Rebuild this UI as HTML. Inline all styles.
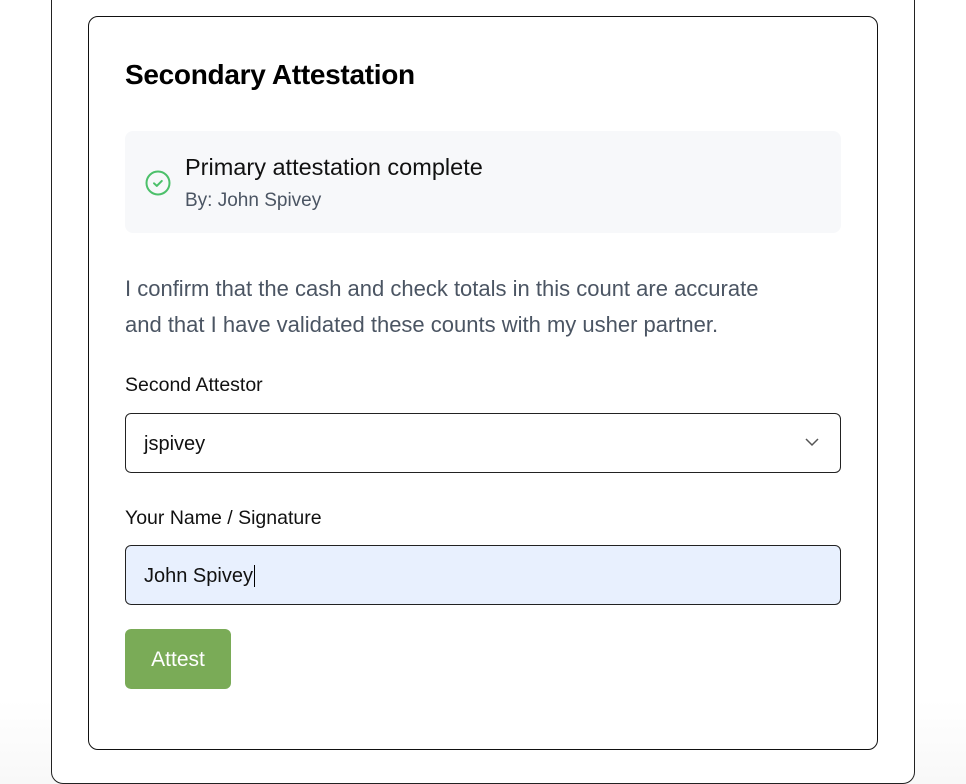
<!DOCTYPE html>
<html><head><style>
body{margin:0;width:966px;height:784px;background:linear-gradient(#fff 0,#fff 700px,#f8f8f8 784px);font-family:"Liberation Sans",sans-serif;position:relative;overflow:hidden}
.outer{position:absolute;left:51px;top:-20px;width:862px;height:802px;border:1px solid #222;border-radius:12px;background:#fff}
.card{position:absolute;left:88px;top:16px;width:788px;height:732px;border:1px solid #111;border-radius:10px;background:#fff}
h2{position:absolute;left:36px;top:42px;margin:0;font-size:28px;font-weight:bold;color:#000;letter-spacing:-0.3px}
.note{position:absolute;left:36px;top:114px;width:716px;height:102px;background:#f7f8fa;border-radius:8px}
.note .t1{position:absolute;left:60px;top:23px;font-size:23.5px;color:#111}
.note .t2{position:absolute;left:60px;top:59px;font-size:19px;color:#4b5563}
.p{position:absolute;left:36px;top:254px;font-size:22px;line-height:36px;color:#4b5563;width:660px}
.lbl{position:absolute;left:36px;font-size:19.5px;color:#111}
.inp{position:absolute;left:36px;width:714px;height:58px;border:1px solid #222;border-radius:6px;font-size:20px;color:#111;box-sizing:content-box}
.inp span{position:absolute;left:18px;top:19px}
.btn{position:absolute;left:36px;top:612px;width:106px;height:60px;background:#7aab57;border-radius:6px;color:#fff;font-size:21px;text-align:center;line-height:62px}
</style></head><body>
<div class="outer"></div>
<div class="card">
<h2>Secondary Attestation</h2>
<div class="note">
<svg style="position:absolute;left:20px;top:39px" width="26" height="26" viewBox="0 0 26 26"><circle cx="13" cy="13" r="11.5" fill="none" stroke="#4cc06a" stroke-width="2"/><path d="M9 13.3l2.8 2.6 5-5" fill="none" stroke="#4cc06a" stroke-width="2" stroke-linecap="round" stroke-linejoin="round"/></svg>
<div class="t1">Primary attestation complete</div>
<div class="t2">By: John Spivey</div>
</div>
<div class="p">I confirm that the cash and check totals in this count are accurate and that I have validated these counts with my usher partner.</div>
<div class="lbl" style="top:357px">Second Attestor</div>
<div class="inp" style="top:396px;background:#fff"><span>jspivey</span>
<svg style="position:absolute;right:20px;top:23px" width="16" height="10" viewBox="0 0 16 10"><path d="M2 2l6 6 6-6" fill="none" stroke="#555" stroke-width="1.5"/></svg></div>
<div class="lbl" style="top:490px">Your Name / Signature</div>
<div class="inp" style="top:528px;background:#e8f0fe"><span>John Spivey<span style="position:static;border-left:1.5px solid #000;margin-left:1px"></span></span></div>
<div class="btn">Attest</div>
</div>
</body></html>
